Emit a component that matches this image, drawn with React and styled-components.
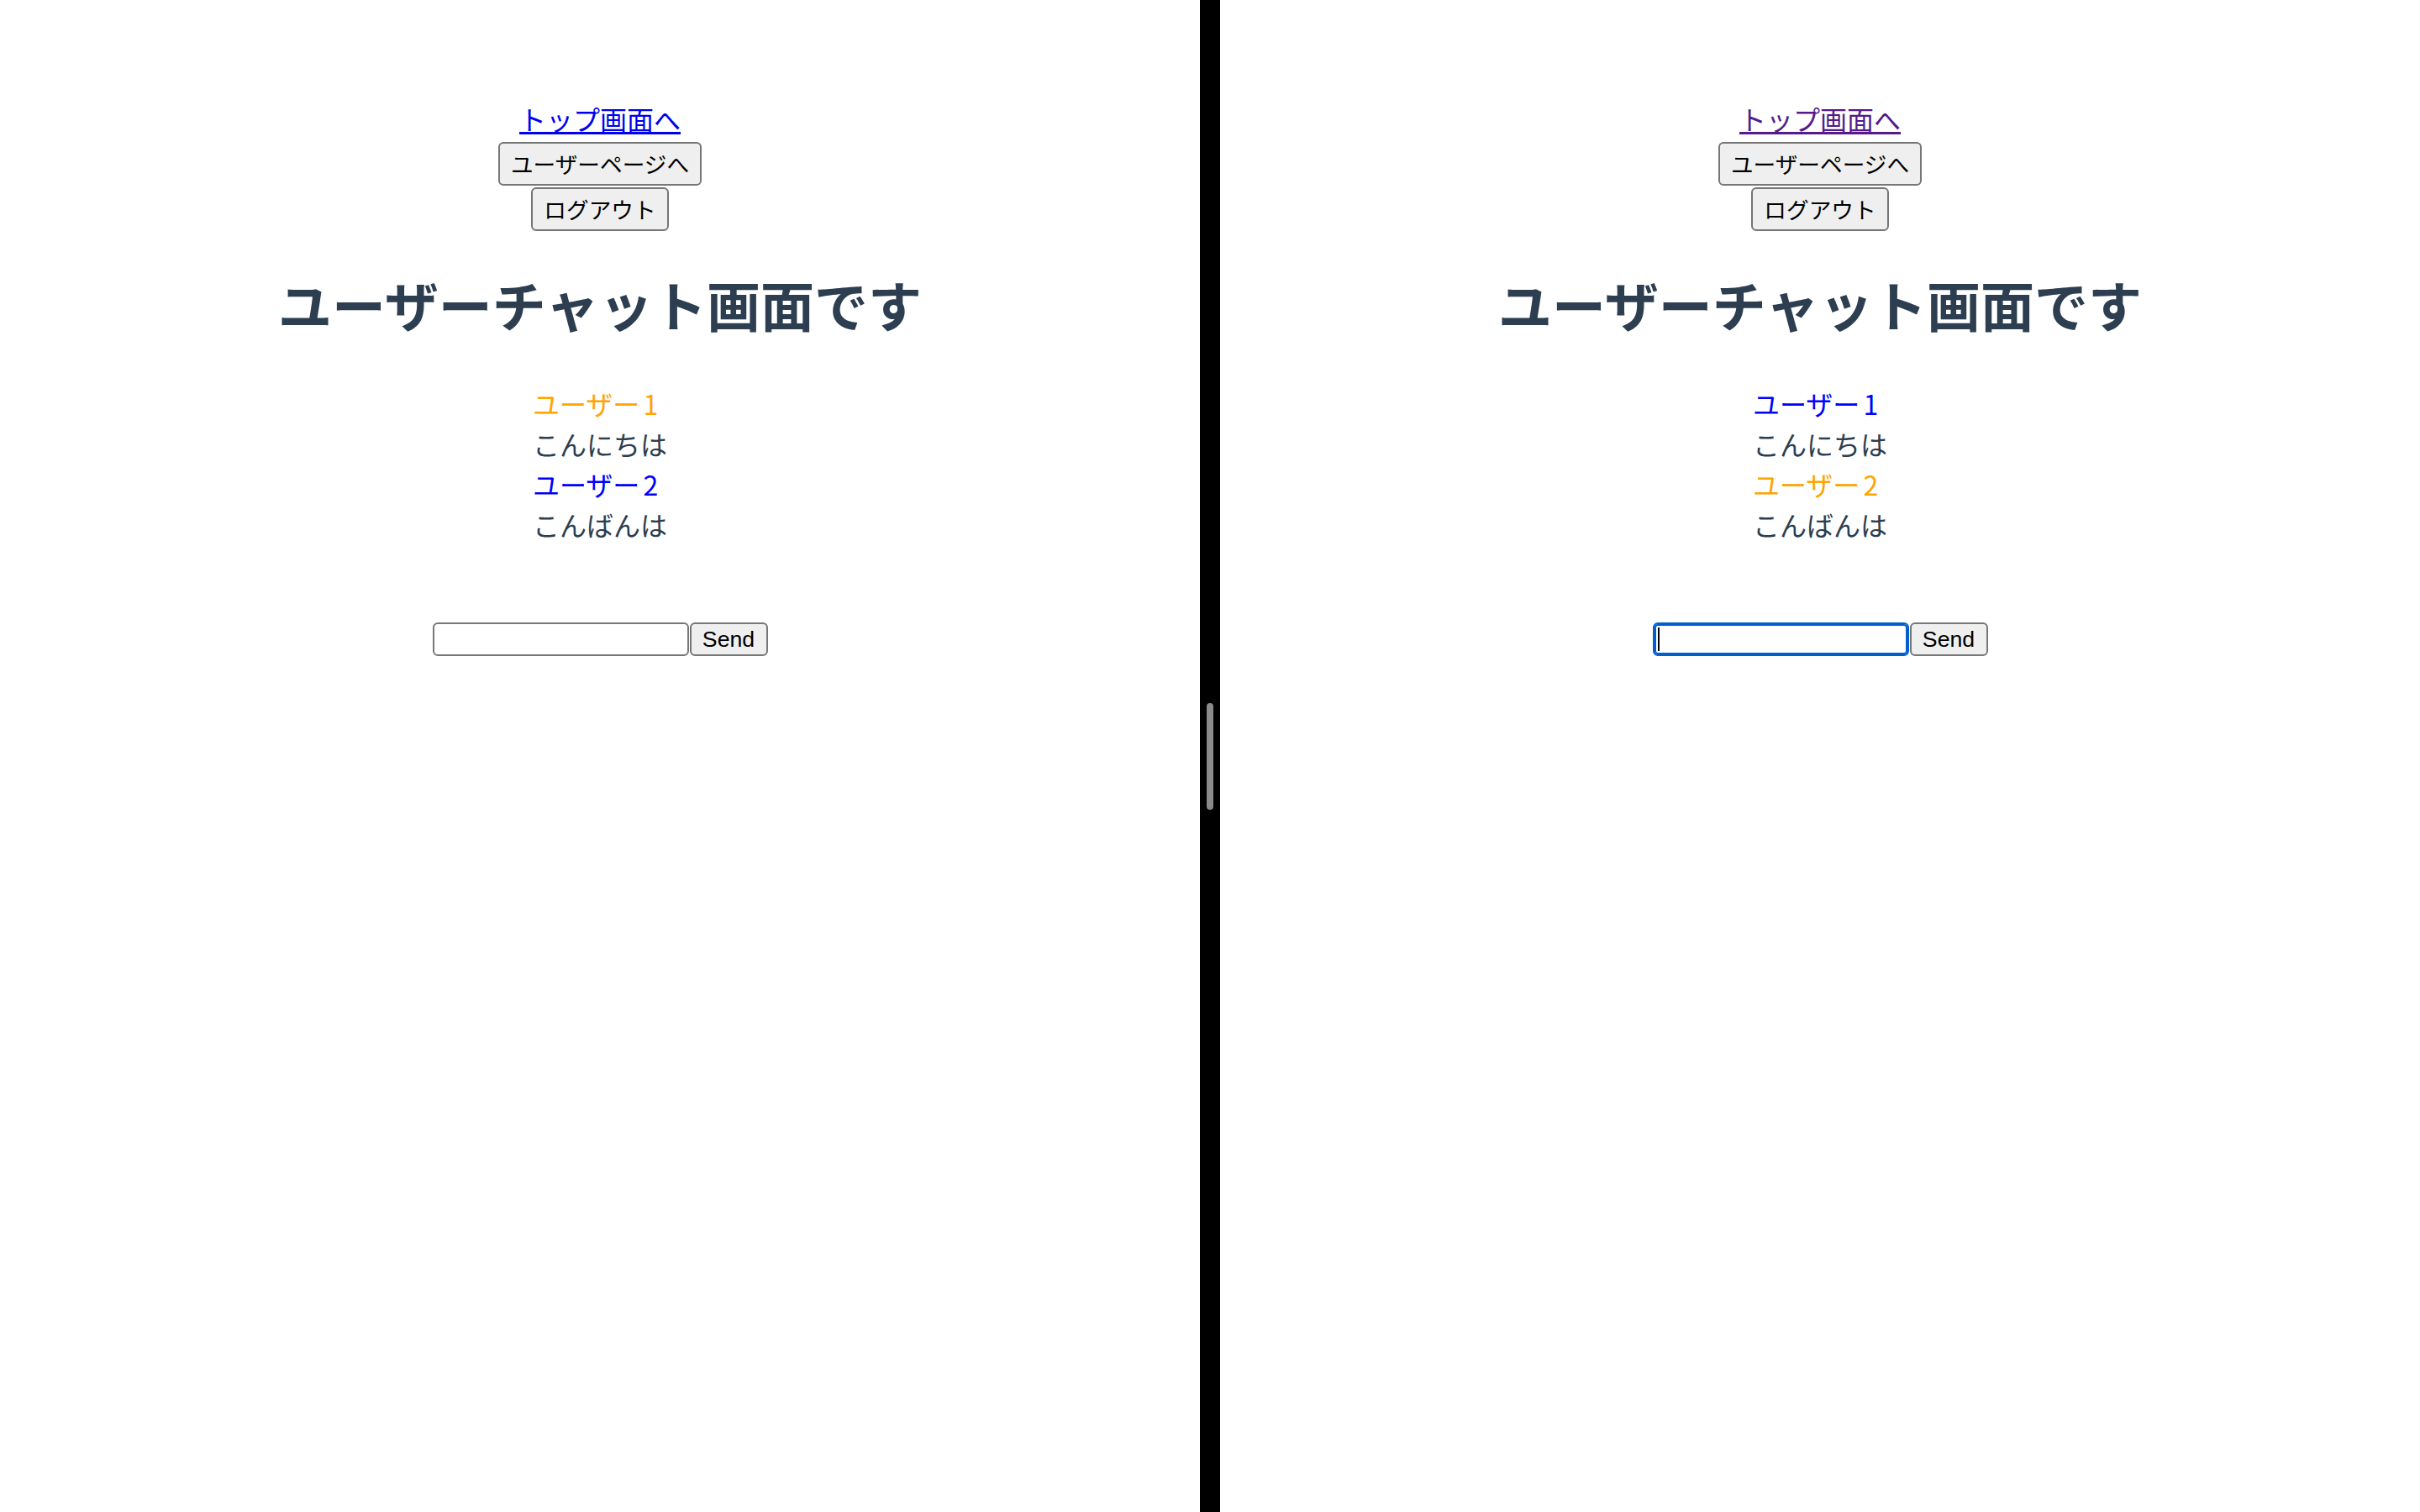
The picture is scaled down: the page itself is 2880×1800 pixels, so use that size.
import React from 'react'
import styled, { createGlobalStyle } from 'styled-components'

const GlobalStyle = createGlobalStyle`
  html, body {
    margin: 0;
    padding: 0;
    background: #ffffff;
  }
  #root {
    width: 2880px;
    height: 1800px;
  }
`

const Screen = styled.div`
  display: flex;
  flex-direction: row;
  width: 2880px;
  height: 1800px;
  overflow: hidden;
`

const Pane = styled.div`
  box-sizing: border-box;
  width: 1428px;
  height: 100%;
  display: flex;
  flex-direction: column;
  align-items: center;
  background: #ffffff;
  color: #2c3e50;
  font-family: 'Noto Sans CJK JP', 'Noto Sans', sans-serif;
`

const Divider = styled.div`
  width: 24px;
  height: 100%;
  background: #000000;
  display: flex;
  align-items: center;
  justify-content: center;
`

const Handle = styled.div`
  width: 8px;
  height: 127px;
  border-radius: 4px;
  background: #8a8a8a;
`

const TopLink = styled.a`
  margin-top: 117px;
  font-size: 32px;
  line-height: 48px;
  color: ${({ $visited }) => ($visited ? '#551a8b' : '#0000ee')};
  text-decoration: underline;
  text-underline-offset: 2px;
  cursor: pointer;
`

const NavButton = styled.button`
  box-sizing: border-box;
  height: 52px;
  margin-top: ${({ $gap }) => $gap}px;
  padding: 0 13px;
  border: 2px solid #767676;
  border-radius: 6px;
  background: #efefef;
  color: #000000;
  font-family: 'Noto Sans CJK JP', sans-serif;
  font-size: 26.67px;
  line-height: 40px;
`

const Title = styled.h1`
  margin: 38px 0 0;
  font-size: 64px;
  line-height: 96px;
  font-weight: 700;
  color: #2c3e50;
  white-space: nowrap;
`

const Messages = styled.div`
  width: 160px;
  margin-top: 47px;
  text-align: left;
`

const Line = styled.div`
  font-family: 'Noto Sans CJK JP', sans-serif;
  font-size: 32px;
  line-height: 48px;
  white-space: nowrap;
  color: ${({ $color }) => $color || '#2c3e50'};
`

const Digit = styled.span`
  margin-left: 4px;
`

const SendRow = styled.div`
  margin-top: 93px;
  display: flex;
  flex-direction: row;
  gap: 1px;
`

const InputWrap = styled.div`
  position: relative;
`

const TextInput = styled.input`
  box-sizing: border-box;
  width: 305px;
  height: 40px;
  padding: 2px 6px;
  border: 2px solid ${({ $focused }) => ($focused ? '#005fcc' : '#767676')};
  box-shadow: ${({ $focused }) => ($focused ? 'inset 0 0 0 2px #005fcc' : 'none')};
  border-radius: 6px;
  background: #ffffff;
  outline: none;
  font-size: 26px;
`

const Caret = styled.span`
  position: absolute;
  left: 6px;
  top: 6px;
  width: 2px;
  height: 28px;
  background: #000000;
`

const SendButton = styled.button`
  box-sizing: border-box;
  width: 93px;
  height: 40px;
  padding: 0;
  border: 2px solid #767676;
  border-radius: 6px;
  background: #efefef;
  color: #000000;
  font-family: 'Liberation Sans', Arial, sans-serif;
  font-size: 26.67px;
  line-height: 34px;
`

const messages = [
  { name: 'ユーザー', num: '1', text: 'こんにちは' },
  { name: 'ユーザー', num: '2', text: 'こんばんは' }
]

const ChatPane = ({ self, visited, focused }) => (
  <Pane>
    <TopLink $visited={visited}>トップ画面へ</TopLink>
    <NavButton $gap={4}>ユーザーページへ</NavButton>
    <NavButton $gap={2}>ログアウト</NavButton>
    <Title>ユーザーチャット画面です</Title>
    <Messages>
      {messages.map((m) => (
        <React.Fragment key={m.num}>
          <Line $color={m.num === self ? '#ffa500' : '#0000ff'}>
            {m.name}<Digit>{m.num}</Digit>
          </Line>
          <Line>{m.text}</Line>
        </React.Fragment>
      ))}
    </Messages>
    <SendRow>
      <InputWrap>
        <TextInput type="text" $focused={focused} readOnly />
        {focused && <Caret />}
      </InputWrap>
      <SendButton>Send</SendButton>
    </SendRow>
  </Pane>
)

export default function App () {
  return (
    <>
      <GlobalStyle />
      <Screen>
        <ChatPane self="1" />
        <Divider>
          <Handle />
        </Divider>
        <ChatPane self="2" visited focused />
      </Screen>
    </>
  )
}
